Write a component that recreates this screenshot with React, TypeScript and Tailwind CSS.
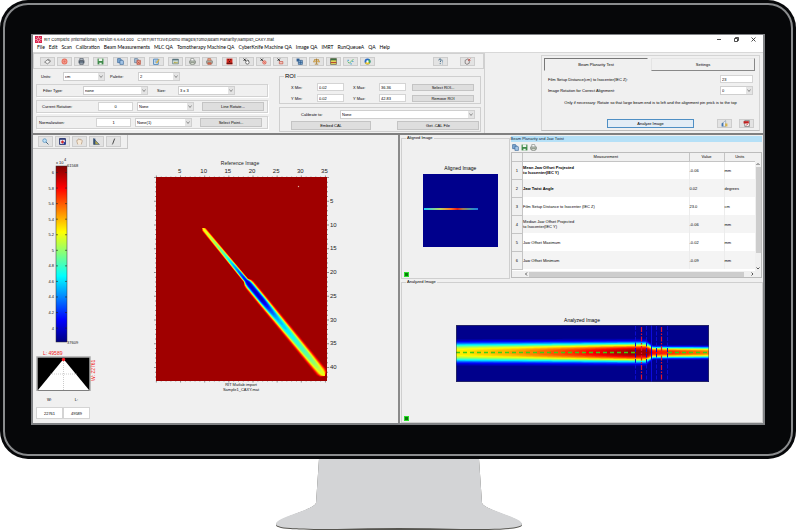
import React, { useState } from "react";
import clsx from "clsx";

type Stop = [number, number];

// ---- colour map helpers ----

const clamp = (n: number) => Math.max(0, Math.min(1, n));

const jet = (v: number) => {
    const channel = (centre: number) => Math.round(255 * clamp(1.5 - Math.abs(4 * v - centre)));
    return `rgb(${channel(3)},${channel(2)},${channel(1)})`;
};

const interpolate = (stops: Stop[], x: number) => {
    if (x <= stops[0][0]) return stops[0][1];
    for (let i = 1; i < stops.length; i++) {
        const [x0, y0] = stops[i - 1];
        const [x1, y1] = stops[i];
        if (x <= x1) return y0 + ((y1 - y0) * (x - x0)) / (x1 - x0);
    }
    return stops[stops.length - 1][1];
};

// One filled band per intensity level, widest first
const contours = (background: number, core: Stop[], width: Stop[], from: number, to: number) => {
    const bands: { d: string; fill: string }[] = [];
    const rising = core[0][1] > background;
    for (let i = 1; i < 40; i++) {
        const level = rising ? background + i * 0.025 : background - i * 0.025;
        const top: string[] = [];
        const bottom: string[] = [];
        let visible = false;
        for (let x = from; x <= to; x += 1) {
            const q = (level - background) / (interpolate(core, x) - background);
            let half = 0;
            if (q > 0 && q < 1) {
                half = interpolate(width, x) * Math.pow(-Math.log(q), 1 / 3);
                visible = true;
            }
            top.push(`${x} ${(-half).toFixed(2)}`);
            bottom.unshift(`${x} ${half.toFixed(2)}`);
        }
        if (visible) bands.push({ d: `M${top.join("L")}L${bottom.join("L")}Z`, fill: jet(level) });
    }
    return bands;
};

const FIELD_BEAM = contours(
    0.965,
    [[0, 0.6], [30, 0.44], [50, 0.25], [70, 0.06], [92, 0.06], [115, 0.28], [140, 0.38], [165, 0.46], [190, 0.6]],
    [[-2, 0], [0, 1.8], [66, 2], [69, 3.4], [72, 3.8], [184, 4.2], [187, 3.4], [190, 0]],
    -2,
    190
);

const ANALYZED_BEAM = contours(
    0.02,
    [[0, 0.65], [60, 0.73], [120, 0.85], [175, 0.99], [192, 0.99], [197, 0.88], [253, 0.76]],
    [[0, 9], [190, 9], [197, 5], [253, 5]],
    0,
    253
);

// ---- icons ----

const ICONS: Record<string, React.ReactNode> = {
    scanner: <path d="M1 7l5-4 5 3-5 4zM6 3l2-1 3 3" fill="#f4f4f4" stroke="#444" />,
    target: (
        <>
            <circle cx="6" cy="6" r="5" fill="#e8705f" />
            <circle cx="6" cy="6" r="2.6" fill="none" stroke="#f7c4ba" />
        </>
    ),
    printerDark: (
        <>
            <path d="M3 1h6v3H3zM3 8h6v3H3z" fill="#c3ccd6" stroke="#3a4450" />
            <path d="M1 4h10v5H1z" fill="#4a5562" />
            <path d="M3 7h6" stroke="#a8c2da" />
        </>
    ),
    save: (
        <>
            <path d="M1 1h10v10H1z" fill="#3f8a4a" />
            <path d="M3 1h6v4H3zM4 8h4v3H4z" fill="#eef5ee" />
        </>
    ),
    copy: (
        <>
            <path d="M1 1h5l1 1v6H1z" fill="#7fa9d4" stroke="#2d5c8f" />
            <path d="M5 4h5l1 1v6H5z" fill="#a5c6e6" stroke="#2d5c8f" />
        </>
    ),
    copyRed: (
        <>
            <path d="M1 1h5l1 1v6H1z" fill="#a9bfd6" stroke="#51708f" />
            <path d="M5 4h6v7H5z" fill="#e9a090" stroke="#b0412f" />
            <path d="M6 6l4 4M10 6l-4 4" stroke="#b0412f" />
        </>
    ),
    edit: (
        <>
            <path d="M1 2h8v9H1z" fill="#d8e9f8" stroke="#3b78b4" strokeWidth="1.4" />
            <path d="M3 5h4M3 7h3" stroke="#3b78b4" />
            <path d="M5 8l5-6 1 1-4 6z" fill="#eec04a" stroke="#b58a1d" strokeWidth=".5" />
        </>
    ),
    picture: (
        <>
            <path d="M1 2h10v8H1z" fill="#cfe0dc" stroke="#4c6a74" />
            <path d="M1 2h10v2H1z" fill="#4c6a74" />
            <path d="M2 9l3-3 2 2 2-2 1 3z" fill="#b8a840" />
        </>
    ),
    printer: (
        <>
            <path d="M3 5V1h5l1 4" fill="#fff" stroke="#6c746c" />
            <path d="M1 5h10v4H1z" fill="#b9c2b4" stroke="#6c746c" />
            <path d="M3 8h6v3H3z" fill="#e8efdf" stroke="#6c746c" />
        </>
    ),
    printerRed: (
        <>
            <path d="M3 5V1h5l1 4" fill="#f0a080" stroke="#a45d4a" />
            <path d="M1 5h10v4H1z" fill="#b9b9b0" stroke="#6c746c" />
            <path d="M3 8h6v3H3z" fill="#e0674a" stroke="#a45d4a" />
        </>
    ),
    quad: (
        <>
            <path d="M1 1h10v10H1z" fill="#d3281f" />
            <path d="M3 2h2v2H3zM7 2h2v2H7zM5 5h2v2H5zM1 8h10v2H1z" fill="#4b0e0c" />
        </>
    ),
    xRotate: (
        <>
            <path d="M1 1l4 4M5 1L1 5" stroke="#111" strokeWidth="1.4" />
            <circle cx="7.5" cy="7.5" r="3" fill="#fff" stroke="#222" />
            <path d="M8 3l2 2" stroke="#222" />
        </>
    ),
    xTarget: (
        <>
            <path d="M1 1l4 4M5 1L1 5" stroke="#111" strokeWidth="1.4" />
            <circle cx="7.5" cy="7.5" r="3" fill="#efa89c" stroke="#d7503f" />
            <path d="M5.5 5.5l4 4" stroke="#d7503f" />
        </>
    ),
    xCopy: (
        <>
            <path d="M1 1l4 4M5 1L1 5" stroke="#111" strokeWidth="1.4" />
            <path d="M4 6h6v4H4z" fill="#f1c3bb" stroke="#c23f30" />
        </>
    ),
    mesh: (
        <>
            <path d="M1 1h5v5H1z" fill="#2f5f95" />
            <path d="M4 4h7v7H4z" fill="#7faad2" stroke="#24507f" />
            <path d="M4 7.5h7M7.5 4v7" stroke="#24507f" />
        </>
    ),
    scale: (
        <>
            <path d="M6 1v9M2 3h8M3 10.5h6" stroke="#a8741a" strokeWidth="1.3" />
            <path d="M.5 7l2-4 2 4zM7.5 7l2-4 2 4z" fill="#efc36c" stroke="#a8741a" strokeWidth=".7" />
        </>
    ),
    table: (
        <>
            <path d="M1 1h10v10H1z" fill="#e6d85a" stroke="#444" />
            <path d="M1 1h10v3H1z" fill="#3c6f44" />
            <path d="M1 7h10v1.5H1z" fill="#b23a2a" />
        </>
    ),
    plot: (
        <>
            <path d="M1 6l3 3 3-3 4-4" fill="none" stroke="#58b868" strokeWidth="1.6" />
            <path d="M1 3h2v2H1zM6 9h2v2H6zM9 5h2v2H9z" fill="#3b9ad6" />
        </>
    ),
    wheel: (
        <>
            <circle cx="6" cy="6" r="5" fill="#2869c4" />
            <path d="M6 6L1.5 8.5A5 5 0 0 0 10.5 8.5z" fill="#efc832" />
            <path d="M6 6l4.5 2.5A5 5 0 0 0 9 2z" fill="#3fae5a" />
            <circle cx="6" cy="6" r="2" fill="#fff" />
        </>
    ),
    help: (
        <>
            <path d="M3 4c0-3 5-3 4 0-.3 1-1.5 1.2-1.5 3M5.5 9v1.5" fill="none" stroke="#2c5878" strokeWidth="1.6" />
            <path d="M9.5 3v5M9.5 9.5V11" stroke="#5f8aa8" />
        </>
    ),
    cube: (
        <>
            <path d="M2 4l4-2 3 2v5l-4 2-3-2z" fill="#e8e0e0" stroke="#4a4a4a" />
            <path d="M7 1l4 4M11 1L7 5" stroke="#c43c34" strokeWidth="1.2" />
        </>
    ),
    zoom: (
        <>
            <circle cx="4.5" cy="4.5" r="3.2" fill="#bfe0f5" stroke="#3d82b8" />
            <path d="M7 7l4 4" stroke="#3a5a74" strokeWidth="1.6" />
        </>
    ),
    palette: (
        <>
            <path d="M1 1h10v10H1z" fill="#e9e9f4" stroke="#25326f" strokeWidth="1.6" />
            <path d="M1 1h10v2H1z" fill="#25326f" />
            <path d="M6 4l3 3-3 3-3-3z" fill="#d22c2c" />
            <path d="M8 7h3v4H8z" fill="#2a3aa0" />
        </>
    ),
    hand: (
        <path d="M3 11L1.5 6C1 4 2 3 3 4c0-3 2-3 2.5-1C6 1 8 1 8 3.5 9.5 2 11 4 10.5 6L9 11" fill="#f7ead8" stroke="#a88868" />
    ),
    ruler: (
        <>
            <path d="M1 1v10h10z" fill="#b5a948" stroke="#33507c" />
            <path d="M1 1h3v10H1z" fill="#33507c" />
        </>
    ),
    pencil: <path d="M8 1L5 9l-1 2" fill="none" stroke="#333" strokeWidth="1.5" />,
    report: (
        <>
            <path d="M1 6l3-2v7H1z" fill="#3f74b5" />
            <path d="M4 4l4-3v10H4z" fill="#e8eef5" stroke="#5a7288" strokeWidth=".7" />
            <path d="M7 6h4v5H7z" fill="#d7b34c" />
        </>
    ),
    pdf: (
        <>
            <path d="M3 1h8v10H3z" fill="#fff" stroke="#555" />
            <path d="M1 2h9v4H1z" fill="#bf1f1f" />
            <path d="M5 10l2-3 2 2" fill="none" stroke="#bf1f1f" />
        </>
    ),
};

const Icon: React.FC<{ name: string }> = ({ name }) => (
    <svg viewBox="0 0 12 12" className="h-[7px] w-[7px]" aria-hidden="true">
        {ICONS[name]}
    </svg>
);

const ToolButton: React.FC<{ name: string; tall?: boolean }> = ({ name, tall }) => (
    <button
        type="button"
        aria-label={name}
        className={clsx(
            "flex w-[15px] shrink-0 items-center justify-center border border-[#cdcdcd] bg-[#e3e3e3]",
            tall ? "h-[11px]" : "h-[9px]"
        )}
    >
        <Icon name={name} />
    </button>
);

// ---- form controls ----

const PushButton: React.FC<{ className?: string; children: React.ReactNode }> = ({ className, children }) => (
    <button type="button" className={clsx("border border-[#c4c4c4] bg-[#dedede] text-center", className)}>
        {children}
    </button>
);

const SelectBox: React.FC<{ id: string; value: string; label?: string; className?: string }> = ({ id, value, label, className }) => (
    <div className={clsx("relative h-[9px] shrink-0", className)}>
        <select id={id} aria-label={label} className="block h-full w-full appearance-none border border-[#cfcfcf] bg-white px-px">
            <option>{value}</option>
        </select>
        <svg viewBox="0 0 6 7" className="pointer-events-none absolute top-px right-px h-[7px] w-[6px] bg-[#e4e4e4]">
            <path d="M1.5 2.5L3 4.5l1.5-2" fill="none" stroke="#777" strokeWidth=".8" />
        </svg>
    </div>
);

const TextBox: React.FC<{ id: string; value: string; className?: string }> = ({ id, value, className }) => (
    <input id={id} defaultValue={value} className={clsx("shrink-0 border border-[#d4d4d4] bg-white px-px", className)} />
);

const GroupRow: React.FC<{ children: React.ReactNode }> = ({ children }) => (
    <div className="flex h-[13px] items-center border border-[#d2d2d2] shadow-[1px_1px_0_#fff]">{children}</div>
);

// ---- top area ----

const MENUS = [
    "File", "Edit", "Scan", "Calibration", "Beam Measurements", "MLC QA", "Tomotherapy Machine QA",
    "CyberKnife Machine QA", "Image QA", "IMRT", "RunQueueA", "QA", "Help",
];

const TitleBar = () => (
    <header className="bg-white text-black">
        <div className="flex h-[8px] items-center pl-[2px]">
            <svg viewBox="0 0 12 12" className="mr-[2px] h-[7px] w-[7px]" aria-hidden="true">
                <path d="M0 0h12v12H0z" fill="#d8244c" />
                <path d="M6 0v12M0 6h12M2 2l8 8M10 2l-8 8" stroke="#fbd6de" strokeWidth=".8" />
                <circle cx="6" cy="6" r="2.5" fill="#d8244c" stroke="#fff" strokeWidth=".8" />
            </svg>
            <h1 className="font-[Inter,sans-serif] text-[4px] whitespace-pre">
                {"RIT Complete (International) Version 6.6.64.000   C:\\RIT\\RIT113V4\\Demo Images\\Tomo\\Beam Planarity\\Sample1_CAXY.mat"}
            </h1>
            <div className="mr-[7px] ml-auto flex gap-[12px]">
                <button type="button" aria-label="Minimize">
                    <svg viewBox="0 0 5 5" className="h-[5px] w-[5px]"><path d="M0 2.5h4" stroke="#222" strokeWidth=".8" /></svg>
                </button>
                <button type="button" aria-label="Restore">
                    <svg viewBox="0 0 5 5" className="h-[5px] w-[5px]">
                        <path d="M.5 1.5h3v3h-3zM1.5 1.5v-1h3v3h-1" fill="none" stroke="#222" strokeWidth=".8" />
                    </svg>
                </button>
                <button type="button" aria-label="Close">
                    <svg viewBox="0 0 5 5" className="h-[5px] w-[5px]">
                        <path d="M.5.5l4 4M4.5.5l-4 4" stroke="#222" strokeWidth=".8" />
                    </svg>
                </button>
            </div>
        </div>
        <nav className="flex h-[10px] items-center gap-[4px] border-b border-[#d8d8d8] pl-[4px] font-[Lato,sans-serif] text-[5px]">
            {MENUS.map((menu) => (
                <button key={menu} type="button" className="whitespace-nowrap">{menu}</button>
            ))}
        </nav>
    </header>
);

const TOOL_GROUPS = [
    { margin: "ml-[6px]", tools: ["scanner", "target", "printerDark"] },
    { margin: "ml-[4px]", tools: ["save"] },
    { margin: "ml-[5px]", tools: ["copy", "copyRed"] },
    { margin: "ml-[4px]", tools: ["edit"] },
    { margin: "ml-[4px]", tools: ["picture", "printer", "printerRed"] },
    { margin: "ml-[5px]", tools: ["quad", "xRotate", "xTarget", "xCopy"] },
    { margin: "ml-[4px]", tools: ["mesh", "scale", "table", "plot", "wheel"] },
];

const Toolbar = () => (
    <div className="flex h-[16px] items-center border border-[#d0d0d0] bg-[#f0f0f0]">
        {TOOL_GROUPS.map((group) => (
            <div key={group.tools[0]} className={clsx("flex gap-[2px]", group.margin)}>
                {group.tools.map((tool) => <ToolButton key={tool} name={tool} />)}
            </div>
        ))}
        <div className="mr-[8px] ml-auto flex gap-[12px]">
            <ToolButton name="help" />
            <ToolButton name="cube" />
        </div>
    </div>
);

const ImageSettings = () => (
    <div className="flex w-[232px] flex-col gap-[3px] pt-[2px]">
        <div className="flex h-[10px] items-center">
            <label htmlFor="units" className="w-[27px] pl-[5px]">Units:</label>
            <SelectBox id="units" value="cm" className="w-[42px]" />
            <label htmlFor="palette" className="w-[33px] pl-[5px]">Palette:</label>
            <SelectBox id="palette" value="2" className="w-[42px]" />
        </div>
        <GroupRow>
            <label htmlFor="filter" className="w-[46px] pl-[6px]">Filter Type:</label>
            <SelectBox id="filter" value="none" className="w-[65px]" />
            <label htmlFor="size" className="w-[30px] pl-[9px]">Size:</label>
            <SelectBox id="size" value="3 x 3" className="w-[57px]" />
        </GroupRow>
        <GroupRow>
            <label htmlFor="rotation" className="w-[61px] pl-[5px]">Current Rotation:</label>
            <TextBox id="rotation" value="0" className="h-[9px] w-[35px] text-center" />
            <SelectBox id="rotation-mode" label="Rotation mode" value="None" className="ml-[4px] w-[57px]" />
            <PushButton className="ml-[8px] h-[9px] w-[62px]">Line Rotate...</PushButton>
        </GroupRow>
        <GroupRow>
            <label htmlFor="normalization" className="w-[59px] pl-[2px]">Normalization:</label>
            <TextBox id="normalization" value="1" className="h-[9px] w-[35px] text-center" />
            <SelectBox id="normalization-mode" label="Normalization mode" value="None(1)" className="ml-[4px] w-[57px]" />
            <PushButton className="ml-[8px] h-[9px] w-[62px]">Select Point...</PushButton>
        </GroupRow>
    </div>
);

const RoiRow: React.FC<{ axis: string; min: string; max: string; action: string }> = ({ axis, min, max, action }) => (
    <div className="flex h-[8px] items-center">
        <label htmlFor={`${axis}-min`} className="w-[37px] pl-[11px]">{axis} Min:</label>
        <TextBox id={`${axis}-min`} value={min} className="h-[8px] w-[27px]" />
        <label htmlFor={`${axis}-max`} className="w-[35px] pl-[9px]">{axis} Max:</label>
        <TextBox id={`${axis}-max`} value={max} className="h-[8px] w-[27px]" />
        <PushButton className="ml-[6px] h-[7px] w-[62px]">{action}</PushButton>
    </div>
);

const RoiSettings = () => (
    <div className="ml-[11px] w-[202px] pt-[3px]">
        <fieldset className="border border-[#cfcfcf]">
            <legend className="ml-[4px] px-px text-[6px] leading-[8px]">ROI</legend>
            <div className="flex flex-col gap-[3px] pt-[3px] pb-px">
                <RoiRow axis="X" min="0.02" max="36.36" action="Select ROI..." />
                <RoiRow axis="Y" min="0.02" max="42.83" action="Remove ROI" />
            </div>
        </fieldset>
        <div className="mt-[3px] border border-[#cfcfcf] pt-[2px] pb-px">
            <div className="flex items-center">
                <label htmlFor="calibrate" className="w-[60px] pl-[21px]">Calibrate to:</label>
                <SelectBox id="calibrate" value="None" className="w-[135px]" />
            </div>
            <div className="mt-[2px] flex justify-between pr-px pl-[11px]">
                <PushButton className="h-[9px] w-[80px]">Embed CAL</PushButton>
                <PushButton className="h-[9px] w-[82px]">Get .CAL File</PushButton>
            </div>
        </div>
    </div>
);

const TestPanel = () => {
    const [tab, setTab] = useState("Beam Planarity Test");

    return (
        <section className="mt-[2px] mr-[3px] ml-auto h-[76px] w-[219px] border border-[#d4d4d4] border-b-[#bdbdbd] px-[2px] pt-[2px]">
            <div className="flex gap-[3px]" role="tablist">
                {["Beam Planarity Test", "Settings"].map((name) => (
                    <button
                        key={name}
                        type="button"
                        role="tab"
                        aria-selected={tab === name}
                        onClick={() => setTab(name)}
                        className={clsx(
                            "h-[13px] w-[104px] border",
                            tab === name
                                ? "border-transparent border-t-[#777] border-l-[#777]"
                                : "border-[#e4e4e4] border-r-[#888] border-b-[#888]"
                        )}
                    >
                        {name}
                    </button>
                ))}
            </div>
            <div className="mt-[4px] flex h-[8px] items-center justify-between pr-[4px] pl-[4px]">
                <label htmlFor="distance">Film Setup Distance(cm) to Isocenter(IEC Z):</label>
                <TextBox id="distance" value="23" className="h-[8px] w-[33px]" />
            </div>
            <div className="mt-[3px] flex h-[9px] items-center justify-between pr-[4px] pl-[4px]">
                <label htmlFor="alignment">Image Rotation for Correct Alignment:</label>
                <SelectBox id="alignment" value="0" className="w-[33px]" />
            </div>
            <p className="mt-[5px] text-center whitespace-nowrap">
                Only if necessary: Rotate so that large beam end is to left and the alignment pin prick is to the top
            </p>
            <div className="mt-[14px] flex items-center pl-[63px]">
                <button type="button" className="h-[9px] w-[87px] border border-[#4f8fc4] bg-[#e3edf6]">Analyze Image</button>
                <div className="mr-[3px] ml-auto flex gap-[7px]">
                    <ToolButton name="report" />
                    <ToolButton name="pdf" />
                </div>
            </div>
        </section>
    );
};

// ---- reference image ----

const ColorBar = () => (
    <svg viewBox="0 0 60 194" className="h-[194px] w-[60px] text-[4px]" fill="#111">
        <defs>
            <linearGradient id="jet" x1="0" y1="0" x2="0" y2="1">
                {Array.from({ length: 17 }, (_, i) => (
                    <stop key={i} offset={i / 16} stopColor={jet(1 - i / 16)} />
                ))}
            </linearGradient>
        </defs>
        <text x="23" y="9">x 10</text>
        <text x="31" y="6">4</text>
        <rect x="23" y="11" width="11" height="176" fill="url(#jet)" stroke="#333" strokeWidth=".5" />
        {["6", "5.8", "5.6", "5.4", "5.2", "5", "4.8", "4.6", "4.4", "4.2", "4"].map((label, i) => (
            <g key={label}>
                <text x="21" y={19 + i * 15.56} textAnchor="end">{label}</text>
                <path d={`M23 ${17.5 + i * 15.56}h2m7 0h2`} stroke="#222" strokeWidth=".6" />
            </g>
        ))}
        <text x="34" y="12">61568</text>
        <text x="34" y="189">37609</text>
    </svg>
);

const WindowLevel = () => (
    <div className="ml-[3px] w-[60px]">
        <svg viewBox="0 0 60 42" className="block h-[42px] w-[60px] text-[5px]" fill="#f01820">
            <text x="7" y="6">L: 49589</text>
            <rect x="1" y="8" width="53" height="34" fill="#000" stroke="#aaa" strokeWidth="1.5" />
            <path d="M2 41L27.5 10 53 41z" fill="#fff" />
            <path d="M27.5 10v31M14 25h27" stroke="#999" strokeWidth=".5" strokeDasharray="1 1" />
            <circle cx="27.5" cy="10.5" r="1.7" />
            <text transform="translate(59 32) rotate(-90)">W: 22761</text>
        </svg>
        <div className="mt-[6px] flex w-[54px] text-center">
            <label htmlFor="window" className="flex-1">W:</label>
            <label htmlFor="level" className="flex-1">L:</label>
        </div>
        <div className="mt-[5px] flex w-[54px]">
            <TextBox id="window" value="22761" className="h-[12px] w-[27px] text-center" />
            <TextBox id="level" value="49589" className="h-[12px] w-[27px] text-center" />
        </div>
    </div>
);

const xAt = (n: number) => 3.4 + n * 4.83;
const yAt = (n: number) => 19 + n * 4.75;

const ReferenceImage = () => (
    <svg viewBox="0 0 189 234" className="h-[234px] w-[189px] shrink-0 text-[6px]" fill="#222">
        <text x="87" y="7" textAnchor="middle" fontSize="5">Reference Image</text>
        {[5, 10, 15, 20, 25, 30, 35].map((n) => (
            <text key={n} x={xAt(n) - 1} y="15" textAnchor="middle">{n}</text>
        ))}
        {[5, 10, 15, 20, 25, 30, 35, 40].map((n) => (
            <text key={n} x="177" y={yAt(n) + 2}>{n}</text>
        ))}
        {Array.from({ length: 36 }, (_, n) => (
            <path key={n} d={`M${xAt(n)} ${n % 5 ? 18.5 : 17.5}v2M${xAt(n)} 222v${n % 5 ? 1.5 : 2.5}`} stroke="#333" strokeWidth=".5" />
        ))}
        {Array.from({ length: 43 }, (_, n) => (
            <path key={n} d={`M${n % 5 ? 2 : 1} ${yAt(n) + 0.5}h2M174 ${yAt(n) + 0.5}h${n % 5 ? 1 : 2}`} stroke="#333" strokeWidth=".5" />
        ))}
        <svg x="3" y="19" width="171" height="204" viewBox="3 19 171 204">
            <rect x="3" y="19" width="171" height="204" fill="#a00000" />
            <g transform="translate(51 71.5) rotate(50.5)">
                {FIELD_BEAM.map((band) => <path key={band.fill} d={band.d} fill={band.fill} />)}
            </g>
            <circle cx="145.5" cy="28.5" r=".7" fill="#e0b0a0" />
        </svg>
        <g fontSize="4" fill="#111" textAnchor="middle">
            <text x="88" y="228">RIT Matlab import</text>
            <text x="88" y="233">Sample1_CAXY.mat</text>
        </g>
    </svg>
);

const ReferencePanel = () => (
    <section className="bg-[#f0f0f0]">
        <div className="flex h-[14px] w-[95px] items-center gap-[2px] border-r border-b border-[#c8c8c8] pl-[5px]">
            {["zoom", "palette", "hand", "ruler", "pencil"].map((tool) => <ToolButton key={tool} name={tool} tall />)}
        </div>
        <div className="flex">
            <div className="w-[63px] shrink-0 pt-[6px]">
                <ColorBar />
                <WindowLevel />
            </div>
            <div className="flex flex-1 justify-center pt-[9px]">
                <ReferenceImage />
            </div>
        </div>
    </section>
);

// ---- results ----

const StatusLight = () => (
    <span className="flex h-[5px] w-[5px] items-center justify-center bg-[#2be02b]">
        <span className="h-[3px] w-[3px] bg-[#0b7a0b]" />
    </span>
);

const AlignedImage = () => (
    <fieldset className="flex w-[30%] min-w-0 flex-col border border-[#cfcfcf]">
        <legend className="ml-[4px] px-px leading-[6px]">Aligned Image</legend>
        <div className="flex h-[131px] flex-col items-center pt-[24px]">
            <p className="mb-[3px] pl-[10px] text-[5px] leading-[6px]">Aligned Image</p>
            <svg viewBox="0 0 75 73" className="ml-[11px] h-[73px] w-[75px]">
                <defs>
                    <linearGradient id="profile">
                        <stop offset="0" stopColor="#18c8ff" />
                        <stop offset=".3" stopColor="#b8d860" />
                        <stop offset=".5" stopColor="#ff7020" />
                        <stop offset=".62" stopColor="#e01818" />
                        <stop offset=".72" stopColor="#a87848" />
                        <stop offset=".85" stopColor="#4898a0" />
                        <stop offset="1" stopColor="#1878e8" />
                    </linearGradient>
                </defs>
                <rect width="75" height="73" fill="#00008c" />
                <rect x="1" y="34" width="54" height="2" fill="url(#profile)" />
            </svg>
        </div>
        <div className="pb-px pl-[2px]"><StatusLight /></div>
    </fieldset>
);

const ROWS = [
    { name: "Mean Jaw Offset Projected\nto Isocenter(IEC Y)", value: "-0.06", units: "mm", strong: true },
    { name: "Jaw Twist Angle", value: "0.02", units: "degrees", strong: true },
    { name: "Film Setup Distance to Isocenter (IEC Z)", value: "23.0", units: "cm" },
    { name: "Median Jaw Offset Projected\nto Isocenter(IEC Y)", value: "-0.06", units: "mm" },
    { name: "Jaw Offset Maximum", value: "-0.02", units: "mm" },
    { name: "Jaw Offset Minimum", value: "-0.09", units: "mm" },
];

const Measurements = () => (
    <section className="mt-px mr-px ml-px flex flex-1 flex-col">
        <h2 className="h-[6px] bg-[#b5e0f7] leading-[6px] text-[#123]">Beam Planarity and Jaw Twist</h2>
        <div className="flex h-[10px] items-center gap-[2px] pl-px">
            {["copy", "save", "printer"].map((tool) => (
                <button key={tool} type="button" aria-label={tool}><Icon name={tool} /></button>
            ))}
        </div>
        <div className="border border-[#bcbcbc] bg-white">
            <div className="flex">
                <div className="h-[118px] flex-1 overflow-hidden">
                    <table className="w-full table-fixed border-collapse">
                        <thead>
                            <tr className="h-[8px] bg-[#f0f0f0]">
                                <th className="w-[11px] border-r border-b border-[#c4c4c4] p-0" />
                                <th className="border-r border-b border-[#c4c4c4] p-0 font-normal">Measurement</th>
                                <th className="w-[35px] border-r border-b border-[#c4c4c4] p-0 font-normal">Value</th>
                                <th className="w-[31px] border-b border-[#c4c4c4] p-0 font-normal">Units</th>
                            </tr>
                        </thead>
                        <tbody>
                            {ROWS.map((row, i) => (
                                <tr key={row.name} className={clsx("h-[18px]", i % 2 ? "bg-[#f4f4f4]" : "bg-white")}>
                                    <th className="border-r border-b border-[#c4c4c4] bg-[#f0f0f0] p-0 font-normal">{i + 1}</th>
                                    <td className={clsx("border-r border-[#ececec] p-0 whitespace-pre-line", row.strong && "font-bold")}>
                                        {row.name}
                                    </td>
                                    <td className="border-r border-[#ececec] p-0">{row.value}</td>
                                    <td className="p-0">{row.units}</td>
                                </tr>
                            ))}
                        </tbody>
                    </table>
                </div>
                <div className="flex w-[6px] flex-col items-center bg-[#f0f0f0] pt-[8px]">
                    <svg viewBox="0 0 6 6" className="h-[6px] w-[6px]"><path d="M1.5 4L3 2.5 4.5 4" fill="none" stroke="#555" /></svg>
                    <div className="h-[86px] w-[5px] bg-[#cdcdcd]" />
                    <svg viewBox="0 0 6 6" className="mt-auto h-[6px] w-[6px]"><path d="M1.5 2.5L3 4l1.5-1.5" fill="none" stroke="#555" /></svg>
                </div>
            </div>
            <div className="flex h-[6px] items-center bg-[#f0f0f0] pr-[6px] pl-[11px]">
                <svg viewBox="0 0 6 6" className="h-[6px] w-[6px]"><path d="M4 1.5L2.5 3 4 4.5" fill="none" stroke="#555" /></svg>
                <div className="h-[5px] flex-1 bg-[#cdcdcd]" />
                <svg viewBox="0 0 6 6" className="ml-[5px] h-[6px] w-[6px]"><path d="M2.5 1.5L4 3 2.5 4.5" fill="none" stroke="#555" /></svg>
            </div>
        </div>
    </section>
);

const AnalyzedImage = () => (
    <fieldset className="min-w-0 border border-[#cfcfcf]">
        <legend className="ml-[4px] px-px leading-[6px]">Analyzed Image</legend>
        <div className="flex h-[131px] flex-col items-center pt-[32px]">
            <p className="mb-[2px] text-[5px] leading-[6px]">Analyzed Image</p>
            <svg viewBox="0 0 253 57" className="h-[57px] w-[253px]">
                <rect width="253" height="57" fill="#00008c" />
                <g transform="translate(0 27.5)">
                    {ANALYZED_BEAM.map((band) => <path key={band.fill} d={band.d} fill={band.fill} />)}
                </g>
                <path d="M0 27.5h179M212 27.5h41" stroke="#3cd010" strokeWidth="1.4" strokeDasharray="4 3" />
                <path d="M179.5 1v55M190.5 1v55M200.5 1v55M211.5 1v55" stroke="#0c0cd0" strokeDasharray="4 1.5" />
                <path d="M195.5 0v57" stroke="#0c0ce0" />
                <path d="M185.5 2v54M205.5 2v54" stroke="#e0142c" strokeWidth="1.2" strokeDasharray="5 1.5 1.5 1.5" />
                <rect x=".3" y=".3" width="252.4" height="56.4" fill="none" stroke="#444" strokeWidth=".5" />
            </svg>
        </div>
        <div className="pb-px pl-[2px]"><StatusLight /></div>
    </fieldset>
);

// ---- monitor ----

const Stand = () => (
    <svg viewBox="0 0 250 72" className="mx-auto block h-[72px] w-[250px]" aria-hidden="true">
        <path d="M45 0h160l3 44c2 7 40 15 40 22 0 5-29 5-61 5H63c-32 0-61 0-61-5 0-7 38-15 40-22z" fill="#55544f" />
        <path d="M45 0h160l3 44c2 7 40 14 40 21 0 5-29 5-61 5q-62-2-124 0c-32 0-61 0-61-5 0-7 38-14 40-21z" fill="#d3d4d6" />
    </svg>
);

const App: React.FC = () => (
    <main className="bg-white font-['Liberation_Sans',Arial,sans-serif] text-[4px] leading-[5px] text-black">
        <div className="mr-px rounded-[28px] bg-[#060709] p-[3px]">
            <div className="rounded-[25px] border-2 border-[#8a8c8e] px-[26px] py-[29px]">
                <div className="border-2 border-t border-[#808285] bg-[#f0f0f0]">
                    <TitleBar />
                    <div className="flex h-[80px]">
                        <div className="w-[452px] shrink-0 border-r border-[#d0d0d0]">
                            <Toolbar />
                            <div className="flex pl-[3px]">
                                <ImageSettings />
                                <RoiSettings />
                            </div>
                        </div>
                        <TestPanel />
                    </div>
                    <div className="grid grid-cols-[365fr_365fr] border-t-2 border-[#808080]">
                        <ReferencePanel />
                        <section className="border-l-2 border-[#8a8a8a] pl-px">
                            <div className="flex">
                                <AlignedImage />
                                <Measurements />
                            </div>
                            <AnalyzedImage />
                        </section>
                    </div>
                </div>
            </div>
        </div>
        <Stand />
    </main>
);

export default App;
